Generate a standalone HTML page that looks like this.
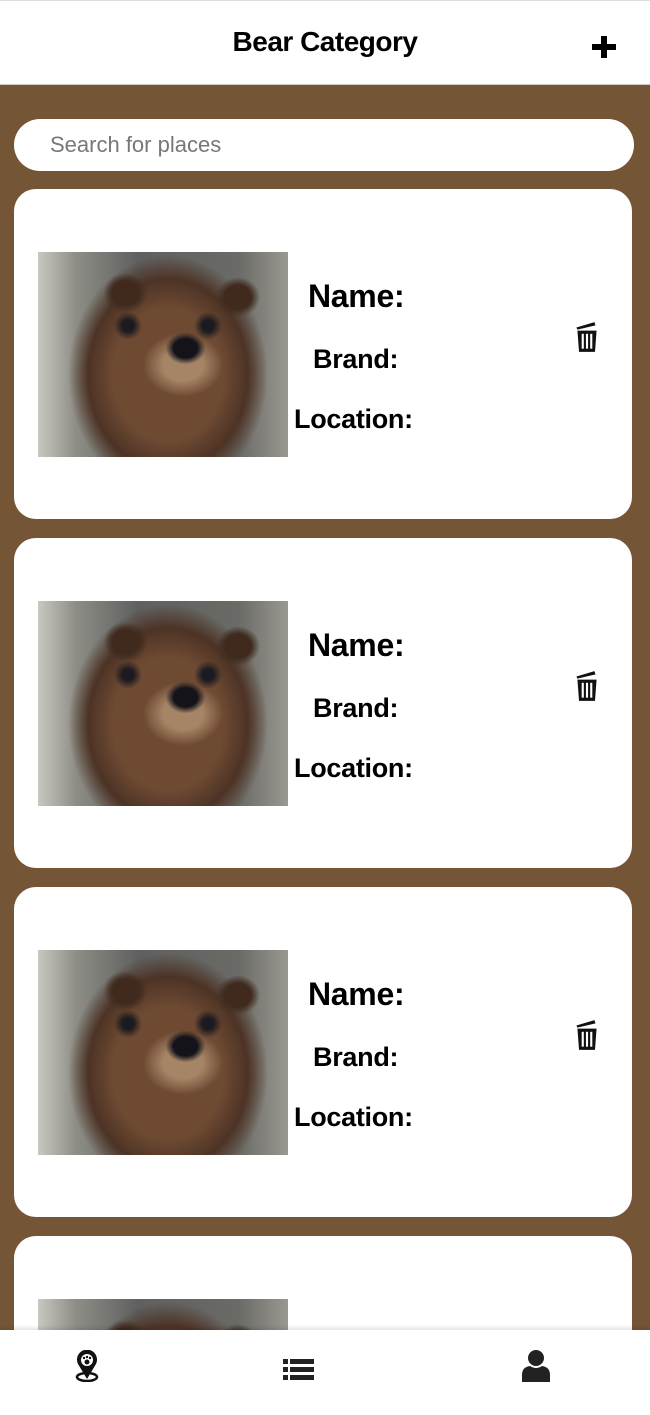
<!DOCTYPE html>
<html style="width:650px;height:1415px;overflow:hidden"><head><meta charset="utf-8"><style>
*{margin:0;padding:0;box-sizing:border-box}
body{width:650px;height:1415px;overflow:hidden;background:#745637;font-family:"Liberation Sans",sans-serif;position:relative}
.hdr{position:absolute;left:0;top:0;width:650px;height:85px;background:#fff;border-top:1px solid #ddd;border-bottom:1px solid #ccc}
.hdr h1{position:absolute;left:0;right:0;top:25px;text-align:center;font-size:28px;font-weight:bold;letter-spacing:-0.5px}
.plus{position:absolute;left:592px;top:35px;width:24px;height:22px}
.plus:before{content:"";position:absolute;left:9px;top:0;width:6px;height:22px;background:#000}
.plus:after{content:"";position:absolute;left:0;top:8px;width:24px;height:6px;background:#000}
.search{position:absolute;left:14px;top:119px;width:620px;height:52px;background:#fff;border-radius:26px;font-size:22px;color:#777;padding:13px 0 0 36px}
.card{position:absolute;left:14px;width:618px;height:330px;background:#fff;border-radius:22px;overflow:hidden}
.img{position:absolute;left:24px;top:63px;width:250px;height:205px;overflow:hidden;
background:radial-gradient(ellipse 14px 14px at 36% 36%,#1b1a20 0 40%,transparent 100%),
radial-gradient(ellipse 14px 14px at 68% 36%,#1b1a20 0 40%,transparent 100%),
radial-gradient(ellipse 20px 16px at 59% 47%,#14131a 0 60%,transparent 100%),
radial-gradient(ellipse 40px 32px at 58% 55%,#a68466 0 50%,transparent 100%),
radial-gradient(ellipse 22px 20px at 35% 20%,#3f2a1d 0 60%,transparent 100%),
radial-gradient(ellipse 22px 20px at 80% 22%,#3f2a1d 0 60%,transparent 100%),
radial-gradient(ellipse 100px 120px at 52% 60%,#6e4a33 0 55%,#4d3325 80%,transparent 100%),
linear-gradient(90deg,#c9c8c0 0,#8e8e86 15%,#5f6060 40%,#6a6a66 80%,#9a9890 100%)}
.t{position:absolute;font-weight:bold;color:#000;letter-spacing:-0.3px}
.n{left:294px;top:89px;font-size:32px}
.b{left:299px;top:155px;font-size:27px}
.l{left:280px;top:215px;font-size:27px}
.trash{position:absolute;left:561px;top:131px}
.nav{position:absolute;left:0;top:1330px;width:650px;height:85px;background:#fff;box-shadow:0 -2px 4px rgba(0,0,0,.12)}
</style></head><body>
<div class="hdr"><h1>Bear Category</h1><div class="plus"></div></div>
<div class="search">Search for places</div>

<div class="card" style="top:189px"><div class="img"></div><div class="t n">Name:</div><div class="t b">Brand:</div><div class="t l">Location:</div>
<svg class="trash" width="24" height="34" viewBox="0 0 22 32"><path d="M1 7 L18 2 L19 5 L2 9Z" fill="#111"/><path d="M2 10h18l-1.5 20h-15z" fill="#111"/><rect x="6" y="13" width="2" height="14" fill="#fff"/><rect x="10" y="13" width="2" height="14" fill="#fff"/><rect x="14" y="13" width="2" height="14" fill="#fff"/></svg></div>
<div class="card" style="top:538px"><div class="img"></div><div class="t n">Name:</div><div class="t b">Brand:</div><div class="t l">Location:</div>
<svg class="trash" width="24" height="34" viewBox="0 0 22 32"><path d="M1 7 L18 2 L19 5 L2 9Z" fill="#111"/><path d="M2 10h18l-1.5 20h-15z" fill="#111"/><rect x="6" y="13" width="2" height="14" fill="#fff"/><rect x="10" y="13" width="2" height="14" fill="#fff"/><rect x="14" y="13" width="2" height="14" fill="#fff"/></svg></div>
<div class="card" style="top:887px"><div class="img"></div><div class="t n">Name:</div><div class="t b">Brand:</div><div class="t l">Location:</div>
<svg class="trash" width="24" height="34" viewBox="0 0 22 32"><path d="M1 7 L18 2 L19 5 L2 9Z" fill="#111"/><path d="M2 10h18l-1.5 20h-15z" fill="#111"/><rect x="6" y="13" width="2" height="14" fill="#fff"/><rect x="10" y="13" width="2" height="14" fill="#fff"/><rect x="14" y="13" width="2" height="14" fill="#fff"/></svg></div>
<div class="card" style="top:1236px;height:179px;border-radius:22px 22px 0 0"><div class="img"></div><div class="t n">Name:</div></div>

<div class="nav">
<svg style="position:absolute;left:74px;top:20px" width="26" height="32" viewBox="0 0 26 32"><ellipse cx="13" cy="27" rx="10" ry="4" fill="none" stroke="#111" stroke-width="2.5"/><path d="M13 29 L4 14 A10 10 0 1 1 22 14Z" fill="#111"/><circle cx="13" cy="10" r="6" fill="#fff"/><circle cx="13" cy="12" r="2.5" fill="#111"/><circle cx="10" cy="8" r="1.2" fill="#111"/><circle cx="13" cy="7" r="1.2" fill="#111"/><circle cx="16" cy="8" r="1.2" fill="#111"/></svg>
<svg style="position:absolute;left:283px;top:27px" width="32" height="26" viewBox="0 0 32 26"><rect x="0" y="2" width="5" height="5" fill="#222"/><rect x="7" y="2" width="24" height="5" fill="#222"/><rect x="0" y="10" width="5" height="5" fill="#222"/><rect x="7" y="10" width="24" height="5" fill="#222"/><rect x="0" y="18" width="5" height="5" fill="#222"/><rect x="7" y="18" width="24" height="5" fill="#222"/></svg>
<svg style="position:absolute;left:521px;top:19px" width="30" height="34" viewBox="0 0 30 34"><circle cx="15" cy="9" r="8" fill="#222"/><path d="M1 33 V26 Q1 18 9 17 Q15 21 21 17 Q29 18 29 26 V33Z" fill="#222"/></svg>
</div>
</body></html>
